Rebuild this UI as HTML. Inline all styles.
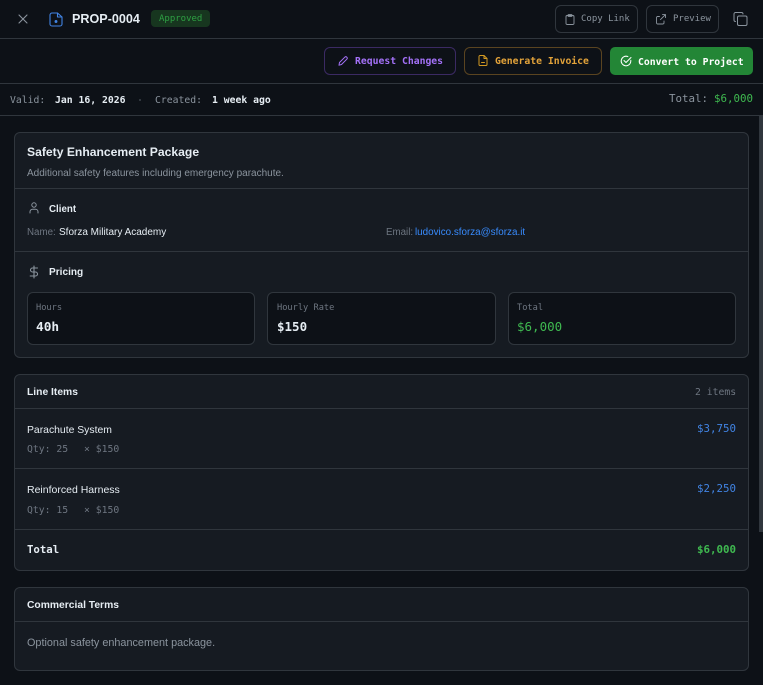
<!DOCTYPE html>
<html><head><meta charset="utf-8"><style>
html,body{margin:0;padding:0;background:#0d1117;width:763px;height:685px;overflow:hidden}
.a{position:absolute}
.t{position:absolute;white-space:nowrap;line-height:16px;height:16px}
.m{font-family:"DejaVu Sans Mono","Liberation Mono",monospace}
.s{font-family:"Liberation Sans",sans-serif}
.b{position:absolute;box-sizing:border-box;border:1px solid #30363d;border-radius:6px}
.card{background:#161b22}
.l{position:absolute;height:1px;background:#30363d}
svg{position:absolute;fill:none;stroke-linecap:round;stroke-linejoin:round}
</style></head><body>
<div class="l" style="left:0;top:38px;width:763px"></div>
<div class="l" style="left:0;top:83px;width:763px"></div>
<div class="l" style="left:0;top:115px;width:763px"></div>

<svg style="left:18px;top:14px" width="10" height="10" viewBox="0 0 10 10" stroke="#8b949e" stroke-width="1.100"><path d="M1 1l8 8M9 1l-8 8"/></svg>
<svg style="left:49px;top:12px" width="14" height="15" viewBox="0 0 14 15" stroke="#4184e4" stroke-width="1.100"><path d="M8.500 1H3a2 2 0 0 0-2 2v9a2 2 0 0 0 2 2h8a2 2 0 0 0 2-2V5z"/><path d="M8.500 1v4H13"/><circle cx="7" cy="9.500" r=".9" fill="#4184e4"/></svg>
<div class="t s" style="left:72px;top:11px;font-size:12.600px;font-weight:700;color:#e6edf3">PROP-0004</div>
<div class="a" style="left:151px;top:10px;width:59px;height:17px;background:#17361f;border-radius:4px"></div>
<div class="t m" style="left:159px;top:11px;font-size:9px;color:#2ea043">Approved</div>

<div class="b" style="left:555px;top:5px;width:83px;height:28px"></div>
<svg style="left:565px;top:14px" width="10" height="11" viewBox="0 0 10 11" stroke="#8b949e" stroke-width=".9"><rect x="1" y="1.500" width="8" height="9" rx="1.200"/><rect x="3" y=".6" width="4" height="1.800" rx=".5"/></svg>
<div class="t m" style="left:581px;top:11px;font-size:9px;color:#8b949e">Copy Link</div>
<div class="b" style="left:646px;top:5px;width:73px;height:28px"></div>
<svg style="left:656px;top:14px" width="10" height="11" viewBox="0 0 10 11" stroke="#8b949e" stroke-width=".9"><path d="M8 7v1.800A1.200 1.200 0 0 1 6.800 10H1.700A1.200 1.200 0 0 1 .5 8.800V3.700A1.200 1.200 0 0 1 1.700 2.500H3.500"/><path d="M6.500 .6H9.500V3.600M9.500 .6L4.500 5.600"/></svg>
<div class="t m" style="left:673px;top:11px;font-size:9px;color:#8b949e">Preview</div>
<svg style="left:733px;top:12px" width="15" height="14" viewBox="0 0 15 14" stroke="#8b949e" stroke-width="1"><rect x="4.500" y="4" width="9.500" height="9.500" rx="1.500"/><path d="M2.500 9.500A1.500 1.500 0 0 1 1 8V2A1.500 1.500 0 0 1 2.500 .5h6A1.500 1.500 0 0 1 10 2"/></svg>

<div class="b" style="left:324px;top:47px;width:132px;height:28px;border-color:#3b2a63"></div>
<svg style="left:338px;top:56px" width="10" height="10" viewBox="0 0 10 10" stroke="#a371f7" stroke-width="1"><path d="M6.800 1.200a1.400 1.400 0 0 1 2 2L3.500 8.500 1 9.200 1.500 6.500z"/></svg>
<div class="t m" style="left:355px;top:54px;font-size:9.750px;font-weight:700;color:#a371f7">Request Changes</div>
<div class="b" style="left:464px;top:47px;width:138px;height:28px;border-color:#5a4420"></div>
<svg style="left:478px;top:55px" width="10" height="11" viewBox="0 0 10 11" stroke="#d29922" stroke-width="1"><path d="M6 .5H2a1 1 0 0 0-1 1v8a1 1 0 0 0 1 1h6a1 1 0 0 0 1-1V3.500z"/><path d="M6 .5v3h3M3.500 7.500h3"/></svg>
<div class="t m" style="left:495px;top:54px;font-size:9.750px;font-weight:700;color:#e3a33a">Generate Invoice</div>
<div class="a" style="left:610px;top:47px;width:143px;height:28px;background:#238636;border-radius:5px"></div>
<svg style="left:620px;top:55px" width="12" height="12" viewBox="0 0 12 12" stroke="#fff" stroke-width="1"><path d="M10.800 5.200v.8a4.800 4.800 0 1 1-2.900-4.400"/><path d="M4 5.500l2 2 5-5"/></svg>
<div class="t m" style="left:638px;top:55px;font-size:9.750px;font-weight:700;color:#fff">Convert to Project</div>

<div class="t m" style="left:10px;top:93px;font-size:9.750px;color:#8b949e">Valid:</div>
<div class="t m" style="left:55px;top:93px;font-size:9.750px;font-weight:700;color:#e6edf3">Jan 16, 2026</div>
<div class="a" style="left:139px;top:99px;width:2px;height:2px;background:#30363d"></div>
<div class="t m" style="left:155px;top:93px;font-size:9.750px;color:#8b949e">Created:</div>
<div class="t m" style="left:212px;top:93px;font-size:9.750px;font-weight:700;color:#e6edf3">1 week ago</div>
<div class="t m" style="left:669px;top:91px;font-size:10.800px;color:#8b949e">Total:</div>
<div class="t m" style="left:714px;top:91px;font-size:10.800px;color:#3fb950">$6,000</div>

<div class="a" style="left:759px;top:116px;width:4px;height:416px;background:#30363d"></div>

<div class="b card" style="left:14px;top:132px;width:735px;height:226px"></div>
<div class="t s" style="left:27px;top:144px;font-size:12.150px;font-weight:700;color:#e6edf3">Safety Enhancement Package</div>
<div class="t s" style="left:27px;top:166px;font-size:10px;color:#8b949e">Additional safety features including emergency parachute.</div>
<div class="l" style="left:15px;top:188px;width:733px"></div>
<svg style="left:29px;top:202px" width="10" height="12" viewBox="0 0 10 12" stroke="#8b949e" stroke-width="1"><circle cx="5" cy="3" r="2.200"/><path d="M1 11V9.800a2.500 2.500 0 0 1 2.500-2.500h3A2.500 2.500 0 0 1 9 9.800V11"/></svg>
<div class="t s" style="left:49px;top:202px;font-size:9.750px;font-weight:700;color:#e6edf3">Client</div>
<div class="t s" style="left:27px;top:225px;font-size:9.750px;color:#6e7681">Name:</div>
<div class="t s" style="left:59px;top:225px;font-size:10px;color:#e6edf3">Sforza Military Academy</div>
<div class="t s" style="left:386px;top:225px;font-size:9.750px;color:#6e7681">Email:</div>
<div class="t s" style="left:415px;top:225px;font-size:9.850px;color:#388bfd">ludovico.sforza@sforza.it</div>
<div class="l" style="left:15px;top:251px;width:733px"></div>
<svg style="left:29px;top:265px" width="10" height="14" viewBox="0 0 10 14" stroke="#8b949e" stroke-width="1.100"><path d="M5 1v12M8.500 3H3.500a2 2 0 0 0 0 4h3a2 2 0 0 1 0 4H1.200"/></svg>
<div class="t s" style="left:49px;top:265px;font-size:10.100px;font-weight:700;color:#e6edf3">Pricing</div>

<div class="b" style="left:27px;top:292px;width:228px;height:53px;background:#0d1117"></div>
<div class="t m" style="left:36px;top:300px;font-size:8.670px;color:#6e7681">Hours</div>
<div class="t m" style="left:36px;top:320px;font-size:12.800px;font-weight:700;color:#e6edf3">40h</div>
<div class="b" style="left:267px;top:292px;width:229px;height:53px;background:#0d1117"></div>
<div class="t m" style="left:277px;top:300px;font-size:8.670px;color:#6e7681">Hourly Rate</div>
<div class="t m" style="left:277px;top:319px;font-size:12.500px;font-weight:700;color:#e6edf3">$150</div>
<div class="b" style="left:508px;top:292px;width:228px;height:53px;background:#0d1117"></div>
<div class="t m" style="left:517px;top:300px;font-size:8.670px;color:#6e7681">Total</div>
<div class="t m" style="left:517px;top:319px;font-size:12.500px;color:#3fb950">$6,000</div>

<div class="b card" style="left:14px;top:374px;width:735px;height:197px"></div>
<div class="t s" style="left:27px;top:385px;font-size:10.300px;font-weight:700;color:#e6edf3">Line Items</div>
<div class="t m" style="left:695px;top:385px;font-size:9.750px;color:#6e7681">2 items</div>
<div class="l" style="left:15px;top:408px;width:733px"></div>
<div class="t s" style="left:27px;top:423px;font-size:10.400px;color:#e6edf3">Parachute System</div>
<div class="t m" style="left:697px;top:421px;font-size:10.800px;color:#4184e4">$3,750</div>
<div class="t m" style="left:27px;top:442px;font-size:9.750px;color:#6e7681">Qty: 25</div>
<div class="t m" style="left:84px;top:442px;font-size:9.750px;color:#6e7681">× $150</div>
<div class="l" style="left:15px;top:468px;width:733px"></div>
<div class="t s" style="left:27px;top:482px;font-size:10.500px;color:#e6edf3">Reinforced Harness</div>
<div class="t m" style="left:697px;top:481px;font-size:10.800px;color:#4184e4">$2,250</div>
<div class="t m" style="left:27px;top:503px;font-size:9.750px;color:#6e7681">Qty: 15</div>
<div class="t m" style="left:84px;top:503px;font-size:9.750px;color:#6e7681">× $150</div>
<div class="l" style="left:15px;top:529px;width:733px"></div>
<div class="t m" style="left:27px;top:542px;font-size:10.700px;font-weight:700;color:#e6edf3">Total</div>
<div class="t m" style="left:697px;top:542px;font-size:10.800px;font-weight:700;color:#3fb950">$6,000</div>

<div class="b card" style="left:14px;top:587px;width:735px;height:84px"></div>
<div class="t s" style="left:27px;top:598px;font-size:10.300px;font-weight:700;color:#e6edf3">Commercial Terms</div>
<div class="l" style="left:15px;top:621px;width:733px"></div>
<div class="t s" style="left:27px;top:635px;font-size:10.850px;color:#8b949e">Optional safety enhancement package.</div>
</body></html>
